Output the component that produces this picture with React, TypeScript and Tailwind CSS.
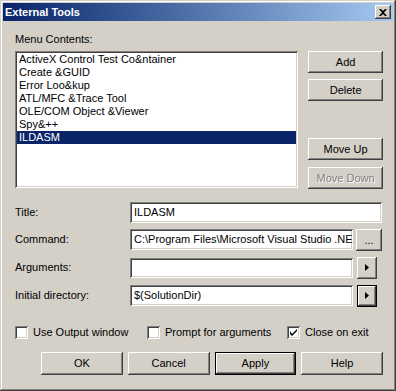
import React from "react";

const raised =
  "shadow-[inset_-1px_-1px_#404040,inset_1px_1px_#ffffff,inset_-2px_-2px_#808080,inset_2px_2px_#d4d0c8]";
const sunken =
  "shadow-[inset_1px_1px_#808080,inset_-1px_-1px_#ffffff,inset_2px_2px_#404040,inset_-2px_-2px_#d4d0c8]";

function Btn({
  children,
  className = "",
  def = false,
  disabled = false,
}: {
  children: React.ReactNode;
  className?: string;
  def?: boolean;
  disabled?: boolean;
}) {
  const inner = (
    <div
      className={`flex h-full w-full items-center justify-center bg-[#d4d0c8] ${raised} ${
        disabled ? "text-[#808080] [text-shadow:1px_1px_#ffffff]" : "text-black"
      }`}
    >
      {children}
    </div>
  );
  if (def) {
    return <div className={`border border-black ${className}`}>{inner}</div>;
  }
  return <div className={className}>{inner}</div>;
}

function Arrow() {
  return (
    <svg width="4" height="7" viewBox="0 0 4 7">
      <path d="M0 0 L4 3.5 L0 7 Z" fill="#000" />
    </svg>
  );
}

function Check({ checked, label, className = "" }: { checked?: boolean; label: string; className?: string }) {
  return (
    <div className={`flex items-center ${className}`}>
      <div className={`relative h-[13px] w-[13px] bg-white ${sunken}`}>
        {checked && (
          <svg className="absolute left-[3px] top-[3px]" width="7" height="7" viewBox="0 0 7 7">
            <path d="M0 2 L0 5 L2 7 L7 2 L7 0 L2 5 Z" fill="#000" />
          </svg>
        )}
      </div>
      <span className="ml-[5px] leading-[13px]">{label}</span>
    </div>
  );
}

export default function App() {
  const items = [
    "ActiveX Control Test Co&ntainer",
    "Create &GUID",
    "Error Loo&kup",
    "ATL/MFC &Trace Tool",
    "OLE/COM Object &Viewer",
    "Spy&++",
    "ILDASM",
  ];
  return (
    <div
      className={`h-[391px] w-[396px] overflow-hidden bg-[#d4d0c8] p-[3px] text-[11px] text-black shadow-[inset_-1px_-1px_#404040,inset_1px_1px_#d4d0c8,inset_-2px_-2px_#808080,inset_2px_2px_#ffffff]`}
      style={{ fontFamily: "Tahoma, 'Liberation Sans', Arial, sans-serif" }}
    >
      {/* title bar */}
      <div className="flex h-[18px] items-center bg-gradient-to-r from-[#0a246a] to-[#a6caf0] pl-[2px] pr-[2px]">
        <span className="flex-1 font-bold leading-[18px] text-white">External Tools</span>
        <div className={`flex h-[14px] w-[16px] items-center justify-center bg-[#d4d0c8] ${raised}`}>
          <svg width="8" height="7" viewBox="0 0 8 7">
            <path d="M0 0h2l2 2 2-2h2L5 3.5 8 7H6L4 5 2 7H0l3-3.5z" fill="#000" />
          </svg>
        </div>
      </div>

      <div className="pl-[12px] pr-[10px]">
        <div className="mt-[11px] h-[14px] leading-[14px]">Menu Contents:</div>
        <div className="mt-[5px] flex">
          <div className={`h-[137px] w-[284px] bg-white p-[2px] ${sunken}`}>
            {items.map((t, i) => (
              <div
                key={t}
                className={`h-[13px] pl-[2px] leading-[13px] ${
                  i === items.length - 1 ? "bg-[#0a246a] text-white" : ""
                }`}
              >
                {t}
              </div>
            ))}
          </div>
          <div className="ml-[10px] flex w-[75px] flex-col">
            <Btn className="h-[22px]">Add</Btn>
            <Btn className="mt-[6px] h-[22px]">Delete</Btn>
            <Btn className="mt-[37px] h-[22px]">Move Up</Btn>
            <Btn className="mt-[7px] h-[22px]" disabled>
              Move Down
            </Btn>
          </div>
        </div>

        {/* fields */}
        <div className="mt-[13px] flex h-[21px] items-center">
          <div className="w-[115px]">Title:</div>
          <div className={`flex h-[21px] w-[252px] items-center bg-white pl-[4px] ${sunken}`}>ILDASM</div>
        </div>
        <div className="mt-[6px] flex h-[21px] items-center">
          <div className="w-[115px]">Command:</div>
          <div className={`flex h-[21px] w-[223px] items-center overflow-hidden whitespace-nowrap bg-white pl-[4px] ${sunken}`}>
            C:\Program Files\Microsoft Visual Studio .NE
          </div>
          <Btn className="ml-[3px] h-[22px] w-[26px]">
            <span className="leading-[10px]">...</span>
          </Btn>
        </div>
        <div className="mt-[7px] flex h-[21px] items-center">
          <div className="w-[115px]">Arguments:</div>
          <div className={`h-[20px] w-[223px] bg-white ${sunken}`} />
          <Btn className="ml-[4px] h-[22px] w-[20px]">
            <Arrow />
          </Btn>
        </div>
        <div className="mt-[7px] flex h-[21px] items-center">
          <div className="w-[115px]">Initial directory:</div>
          <div className={`flex h-[21px] w-[223px] items-center bg-white pl-[4px] ${sunken}`}>$(SolutionDir)</div>
          <Btn className="ml-[4px] h-[22px] w-[20px]" def>
            <Arrow />
          </Btn>
        </div>

        {/* checkboxes */}
        <div className="mt-[20px] flex h-[13px]">
          <Check label="Use Output window" className="w-[132px]" />
          <Check label="Prompt for arguments" className="w-[140px]" />
          <Check label="Close on exit" checked />
        </div>

        {/* buttons */}
        <div className="mt-[13px] flex h-[23px] pl-[26px]">
          <Btn className="h-[23px] w-[82px]">OK</Btn>
          <Btn className="ml-[5px] h-[23px] w-[82px]">Cancel</Btn>
          <Btn className="ml-[5px] h-[23px] w-[82px]" def>
            Apply
          </Btn>
          <Btn className="ml-[5px] h-[23px] w-[82px]">Help</Btn>
        </div>
      </div>
    </div>
  );
}
